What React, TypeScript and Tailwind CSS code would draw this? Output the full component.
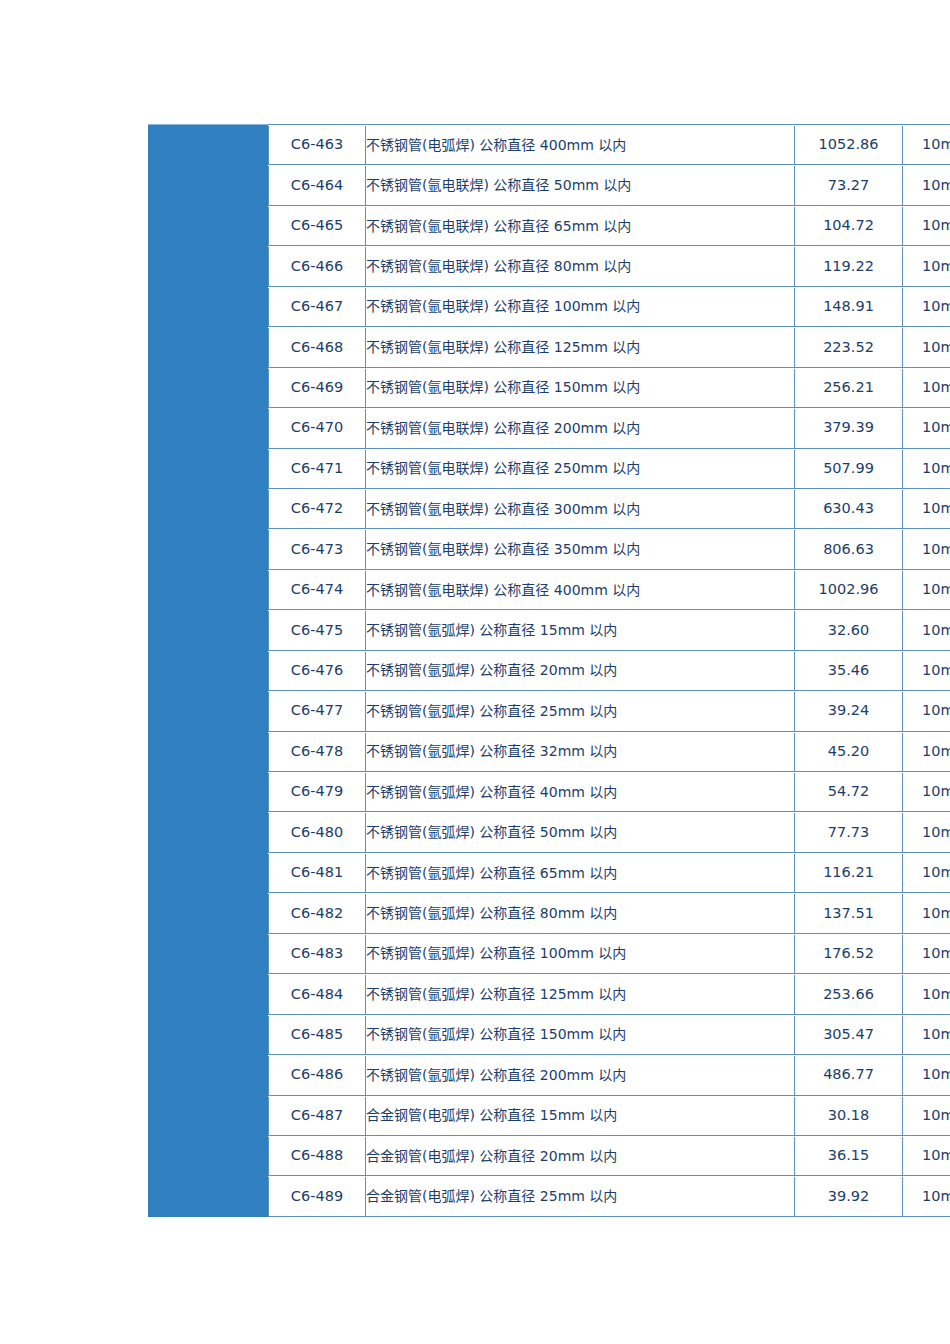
import React from "react";

const rows: [string, string, string][] = [
  ["C6-463", "不锈钢管(电弧焊) 公称直径 400mm 以内", "1052.86"],
  ["C6-464", "不锈钢管(氩电联焊) 公称直径 50mm 以内", "73.27"],
  ["C6-465", "不锈钢管(氩电联焊) 公称直径 65mm 以内", "104.72"],
  ["C6-466", "不锈钢管(氩电联焊) 公称直径 80mm 以内", "119.22"],
  ["C6-467", "不锈钢管(氩电联焊) 公称直径 100mm 以内", "148.91"],
  ["C6-468", "不锈钢管(氩电联焊) 公称直径 125mm 以内", "223.52"],
  ["C6-469", "不锈钢管(氩电联焊) 公称直径 150mm 以内", "256.21"],
  ["C6-470", "不锈钢管(氩电联焊) 公称直径 200mm 以内", "379.39"],
  ["C6-471", "不锈钢管(氩电联焊) 公称直径 250mm 以内", "507.99"],
  ["C6-472", "不锈钢管(氩电联焊) 公称直径 300mm 以内", "630.43"],
  ["C6-473", "不锈钢管(氩电联焊) 公称直径 350mm 以内", "806.63"],
  ["C6-474", "不锈钢管(氩电联焊) 公称直径 400mm 以内", "1002.96"],
  ["C6-475", "不锈钢管(氩弧焊) 公称直径 15mm 以内", "32.60"],
  ["C6-476", "不锈钢管(氩弧焊) 公称直径 20mm 以内", "35.46"],
  ["C6-477", "不锈钢管(氩弧焊) 公称直径 25mm 以内", "39.24"],
  ["C6-478", "不锈钢管(氩弧焊) 公称直径 32mm 以内", "45.20"],
  ["C6-479", "不锈钢管(氩弧焊) 公称直径 40mm 以内", "54.72"],
  ["C6-480", "不锈钢管(氩弧焊) 公称直径 50mm 以内", "77.73"],
  ["C6-481", "不锈钢管(氩弧焊) 公称直径 65mm 以内", "116.21"],
  ["C6-482", "不锈钢管(氩弧焊) 公称直径 80mm 以内", "137.51"],
  ["C6-483", "不锈钢管(氩弧焊) 公称直径 100mm 以内", "176.52"],
  ["C6-484", "不锈钢管(氩弧焊) 公称直径 125mm 以内", "253.66"],
  ["C6-485", "不锈钢管(氩弧焊) 公称直径 150mm 以内", "305.47"],
  ["C6-486", "不锈钢管(氩弧焊) 公称直径 200mm 以内", "486.77"],
  ["C6-487", "合金钢管(电弧焊) 公称直径 15mm 以内", "30.18"],
  ["C6-488", "合金钢管(电弧焊) 公称直径 20mm 以内", "36.15"],
  ["C6-489", "合金钢管(电弧焊) 公称直径 25mm 以内", "39.92"],
];

export default function App() {
  return (
    <div
      className="w-[950px] h-[1344px] overflow-hidden bg-white text-[#1c3d6b] text-[14.5px]"
      style={{ fontFamily: '"DejaVu Sans", "Noto Sans CJK SC", sans-serif' }}
    >
      <div className="flex pt-[124px] pl-[148px] w-[1100px]">
        <div className="w-[120px] shrink-0 bg-[#2f7fc1] border-t border-[#8ab6e0] h-[1093px]" />
        <div className="flex flex-col border-t border-[#5b8fc6]">
          {rows.map(([code, desc, price]) => (
            <div key={code} className="flex h-[40.45px] border-b border-[#5b8fc6] pt-px">
              <div className="w-[97px] shrink-0 border-l border-[#5b8fc6] flex items-center justify-center">
                {code}
              </div>
              <div className="w-[429px] shrink-0 border-l border-[#5b8fc6] flex items-center text-[14px]">
                {desc}
              </div>
              <div className="w-[108px] shrink-0 border-l border-[#5b8fc6] flex items-center justify-center">
                {price}
              </div>
              <div className="w-[120px] shrink-0 border-l border-[#5b8fc6] flex items-center pl-[19px]">
                10m
              </div>
            </div>
          ))}
        </div>
      </div>
    </div>
  );
}
